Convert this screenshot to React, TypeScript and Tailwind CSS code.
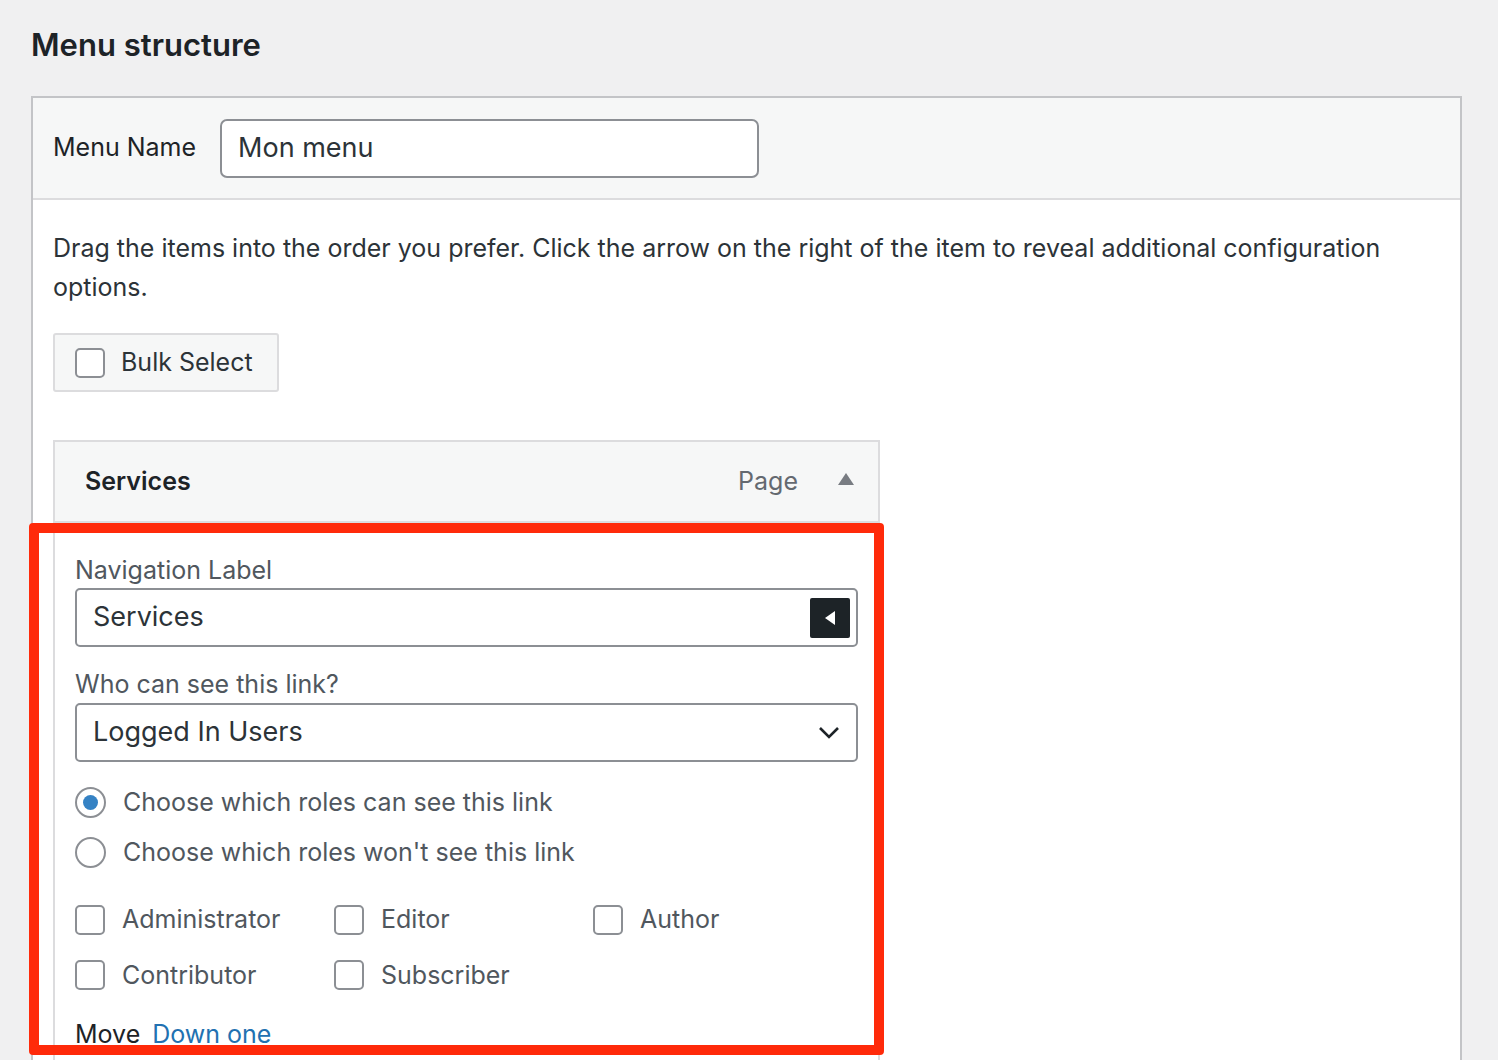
export default function App() {
  const box = "w-[30px] h-[30px] rounded-[5px] border-2 border-[#8c8f94] bg-white shrink-0";
  const Check = ({ label, w }: { label: string; w: string }) => (
    <div className={`flex items-center gap-[17px] ${w}`}>
      <span className={box} />
      <span>{label}</span>
    </div>
  );
  return (
    <div className="min-h-[1060px] h-[1060px] overflow-hidden bg-[#f0f0f1] text-[#3c434a] px-[31px] pt-[24px] text-[25px]" style={{ fontFamily: "Inter, 'Noto Sans', sans-serif" }}>
      <h2 className="text-[31px] font-semibold text-[#1d2327] leading-[42px] m-0">Menu structure</h2>
      <div className="mt-[30px] w-[1431px] border-2 border-[#c3c4c7] bg-white h-[1000px]">
        <div className="bg-[#f6f7f7] border-b-2 border-[#dcdcde] h-[102px] flex items-center px-[20px] gap-[24px]">
          <span className="text-[#1d2327]">Menu Name</span>
          <div className="w-[539px] h-[59px] border-2 border-[#8c8f94] rounded-[7px] bg-white flex items-center px-[16px] text-[27px] text-[#2c3338]">Mon menu</div>
        </div>
        <div className="px-[20px] pt-[29px] relative">
          <p className="leading-[39px] m-0 text-[#2c3338]">Drag the items into the order you prefer. Click the arrow on the right of the item to reveal additional configuration options.</p>
          <div className="mt-[26px] w-[226px] h-[59px] border-2 border-[#dcdcde] bg-[#f6f7f7] rounded-[3px] flex items-center px-[20px] gap-[16px] text-[#2c3338]">
            <span className={box} />
            <span>Bulk Select</span>
          </div>
          <div className="mt-[48px] w-[827px]">
            <div className="h-[83px] border-2 border-[#dcdcde] bg-[#f6f7f7] flex items-center px-[30px]">
              <span className="font-semibold text-[#1d2327] flex-1">Services</span>
              <span className="text-[#646970] mr-[40px]">Page</span>
              <svg width="16" height="12" viewBox="0 0 16 12" className="mr-[-6px] mb-[6px]"><path d="M0 12 L8 0 L16 12 Z" fill="#787c82" /></svg>
            </div>
            <div className="border-2 border-t-0 border-[#dcdcde] bg-white px-[20px] pt-[32px] pb-[40px]">
              <div className="text-[#50575e] leading-[30px]">Navigation Label</div>
              <div className="mt-[3px] h-[59px] border-2 border-[#8c8f94] rounded-[5px] flex items-center pl-[16px] pr-[6px] text-[27px] text-[#2c3338]">
                <span className="flex-1">Services</span>
                <span className="w-[40px] h-[40px] bg-[#1d2327] rounded-[2px] flex items-center justify-center">
                  <svg width="10" height="14" viewBox="0 0 10 14"><path d="M10 0 L0 7 L10 14 Z" fill="#fff" /></svg>
                </span>
              </div>
              <div className="mt-[22px] text-[#50575e] leading-[30px]">Who can see this link?</div>
              <div className="mt-[4px] h-[59px] border-2 border-[#8c8f94] rounded-[5px] flex items-center pl-[16px] pr-[16px] text-[27px] text-[#2c3338]">
                <span className="flex-1">Logged In Users</span>
                <svg width="22" height="14" viewBox="0 0 22 14"><path d="M2 2 L11 11 L20 2" stroke="#1d2327" strokeWidth="2.6" fill="none" /></svg>
              </div>
              <div className="mt-[22px] flex flex-col gap-[12px] text-[#50575e]">
                <div className="flex items-center gap-[17px]">
                  <span className="w-[31px] h-[31px] rounded-full border-2 border-[#8c8f94] flex items-center justify-center"><span className="w-[15px] h-[15px] rounded-full bg-[#3582c4]" /></span>
                  <span>Choose which roles can see this link</span>
                </div>
                <div className="flex items-center gap-[17px]">
                  <span className="w-[31px] h-[31px] rounded-full border-2 border-[#8c8f94]" />
                  <span>Choose which roles won't see this link</span>
                </div>
              </div>
              <div className="mt-[30px] grid grid-cols-[259px_259px_259px] gap-y-[18px] text-[#50575e]">
                <Check label="Administrator" w="" />
                <Check label="Editor" w="" />
                <Check label="Author" w="" />
                <Check label="Contributor" w="" />
                <Check label="Subscriber" w="" />
              </div>
              <div className="mt-[22px] text-[#1d2327] flex gap-[12px]">
                <span>Move</span>
                <span className="text-[#2271b1] underline">Down one</span>
              </div>
            </div>
          </div>
          <div className="absolute left-[-4px] top-[323px] w-[855px] h-[532px] border-[10px] border-[#ff2a0a] rounded-[4px] pointer-events-none" />
        </div>
      </div>
    </div>
  );
}
